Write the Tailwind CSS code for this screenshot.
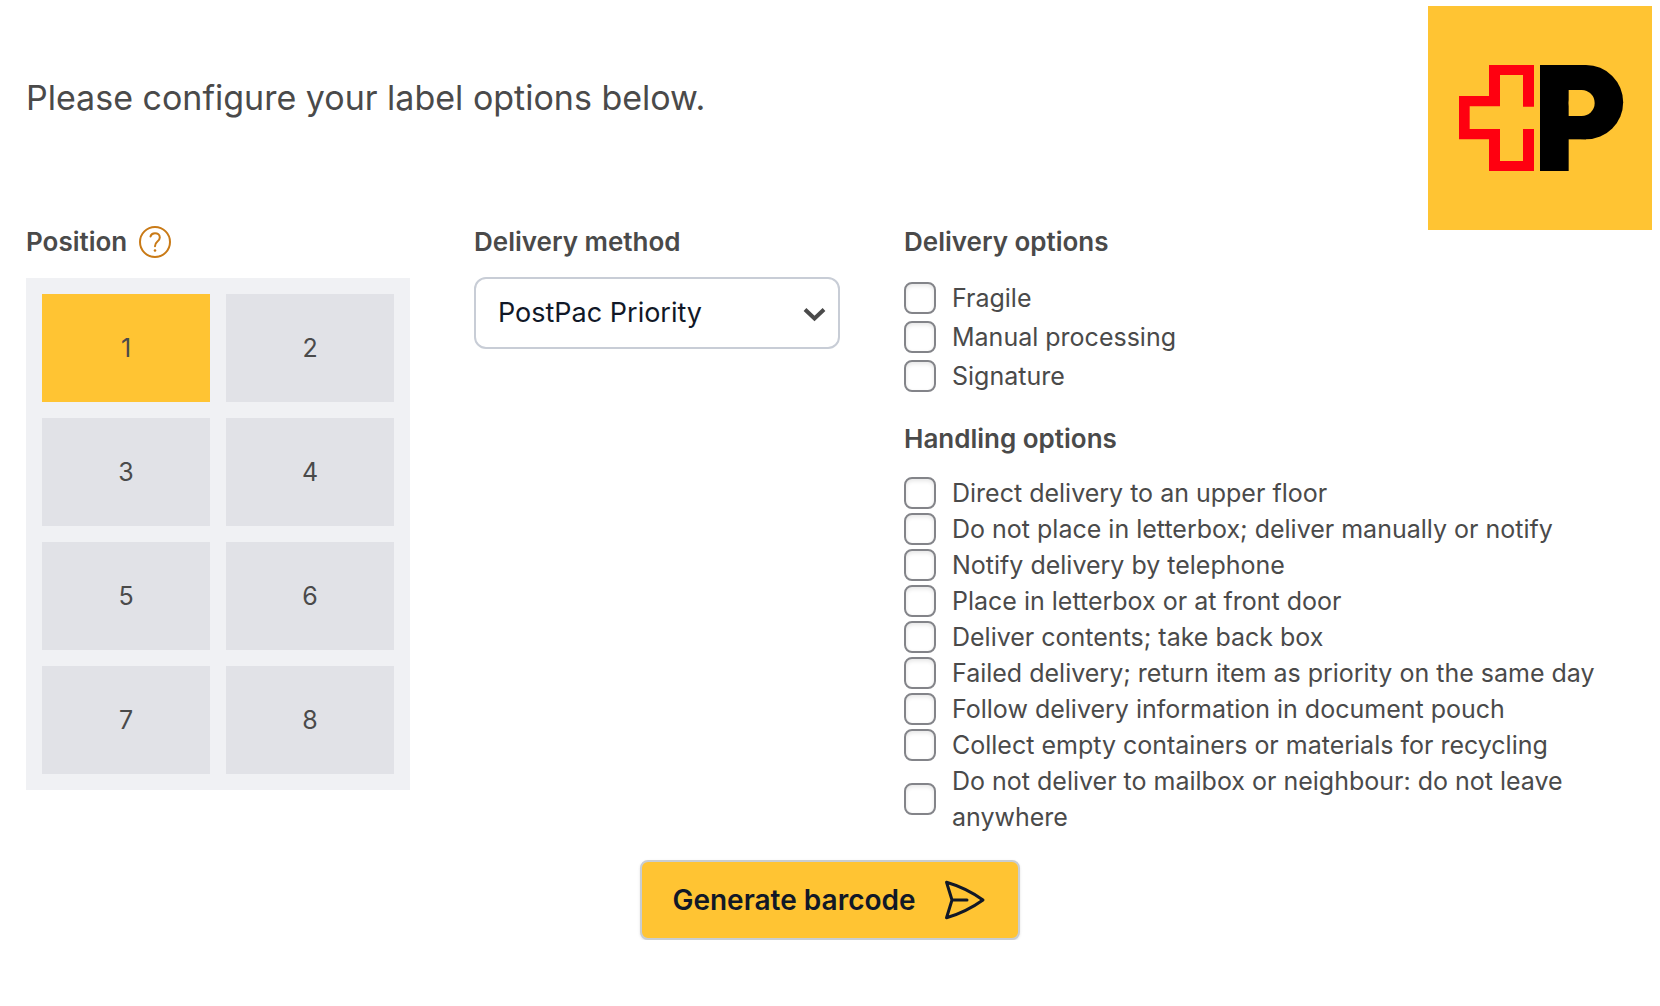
<!DOCTYPE html>
<html lang="en">
<head>
    <meta charset="UTF-8">
    <meta name="viewport" content="width=device-width, initial-scale=1.0">
    <title>Label options</title>
    <script src="https://cdn.jsdelivr.net/npm/@tailwindcss/browser@4"></script>
</head>
<body class="bg-white font-['Inter',sans-serif] text-[25px] leading-9 text-[#4a4a4a]">

    <header class="flex items-start justify-between pl-[26px] pr-2 pt-1.5 -mb-1.5">
        <h1 class="pt-[67px] text-[34px] leading-[50px]">Please configure your label options below.</h1>
        <!-- Carrier logo -->
        <svg class="size-56 shrink-0" viewBox="24 18 672 672" role="img" aria-label="Post">
            <rect x="24" y="18" width="672" height="672" fill="#ffc433"/>
            <path fill="#ff0010" d="M207 195H342V320H309V225H240V319H149V387H240V483H309V387H342V513H207V418H117V288H207Z"/>
            <rect x="360" y="195" width="86" height="318"/>
            <rect x="440" y="195" width="58" height="223"/>
            <circle cx="498" cy="306.500" r="111.500"/>
            <rect x="446" y="270" width="40" height="78" fill="#ffc433"/>
            <circle cx="485" cy="309" r="39" fill="#ffc433"/>
        </svg>
    </header>

    <form onsubmit="return false">
        <div class="flex gap-16 pl-[26px] pr-6">
            <section class="w-96 shrink-0">
                <div class="mb-[18px] flex items-center gap-3">
                    <h2 class="text-[26px] leading-9 font-semibold">Position</h2>
                    <button type="button" aria-label="Help" class="cursor-pointer text-[#c97a16]">
                        <svg class="size-8" viewBox="0 0 32 32" fill="none" stroke="currentColor" stroke-width="2" stroke-linecap="round">
                            <circle cx="16" cy="16" r="15"/>
                            <path d="M11.500 10.500C12 8.300 13.700 7.200 16 7.200C18.700 7.200 20.800 8.900 20.800 11.400C20.800 13.400 19.700 14.500 18.200 15.700C16.700 16.900 16 17.800 16 20.300"/>
                            <circle cx="16" cy="24.500" r="1.300" fill="currentColor" stroke="none"/>
                        </svg>
                    </button>
                </div>
                <div class="grid grid-cols-2 gap-4 bg-[#f0f1f4] p-4" id="positions">
                    <button type="button" class="h-[108px] cursor-pointer bg-[#ffc433]">1</button>
                    <button type="button" class="h-[108px] cursor-pointer bg-[#e1e2e7]">2</button>
                    <button type="button" class="h-[108px] cursor-pointer bg-[#e1e2e7]">3</button>
                    <button type="button" class="h-[108px] cursor-pointer bg-[#e1e2e7]">4</button>
                    <button type="button" class="h-[108px] cursor-pointer bg-[#e1e2e7]">5</button>
                    <button type="button" class="h-[108px] cursor-pointer bg-[#e1e2e7]">6</button>
                    <button type="button" class="h-[108px] cursor-pointer bg-[#e1e2e7]">7</button>
                    <button type="button" class="h-[108px] cursor-pointer bg-[#e1e2e7]">8</button>
                </div>
            </section>

            <section class="flex-1">
                <label for="method" class="mb-[17px] block text-[26px] leading-9 font-semibold">Delivery method</label>
                <div class="relative">
                    <select id="method" class="h-[72px] w-full appearance-none rounded-xl border-2 border-[#c8cdd6] bg-white pl-[22px] pr-14 text-[27px] text-[#111827]">
                        <option>PostPac Priority</option>
                        <option>PostPac Economy</option>
                    </select>
                    <svg class="pointer-events-none absolute right-3.5 top-6 size-6" viewBox="0 0 24 24" fill="none" stroke="#4a4a4a" stroke-width="4">
                        <path d="M3 8.500L12.500 17.500L22 8.500"/>
                    </svg>
                </div>
            </section>

            <section class="flex-2">
                <h2 class="mb-5 text-[26px] leading-9 font-semibold">Delivery options</h2>
                <div class="grid gap-[3px]">
                    <label class="flex items-center gap-4"><input type="checkbox" class="size-8 shrink-0 appearance-none rounded-lg border-2 border-[#838489] bg-white shadow-[inset_0_2px_4px_rgba(0,0,0,0.1)] checked:bg-[#ffc433]">Fragile</label>
                    <label class="flex items-center gap-4"><input type="checkbox" class="size-8 shrink-0 appearance-none rounded-lg border-2 border-[#838489] bg-white shadow-[inset_0_2px_4px_rgba(0,0,0,0.1)] checked:bg-[#ffc433]">Manual processing</label>
                    <label class="flex items-center gap-4"><input type="checkbox" class="size-8 shrink-0 appearance-none rounded-lg border-2 border-[#838489] bg-white shadow-[inset_0_2px_4px_rgba(0,0,0,0.1)] checked:bg-[#ffc433]">Signature</label>
                </div>

                <h2 class="mb-[18px] mt-[27px] text-[26px] leading-9 font-semibold">Handling options</h2>
                <div class="grid">
                    <label class="flex items-center gap-4"><input type="checkbox" class="size-8 shrink-0 appearance-none rounded-lg border-2 border-[#838489] bg-white shadow-[inset_0_2px_4px_rgba(0,0,0,0.1)] checked:bg-[#ffc433]">Direct delivery to an upper floor</label>
                    <label class="flex items-center gap-4"><input type="checkbox" class="size-8 shrink-0 appearance-none rounded-lg border-2 border-[#838489] bg-white shadow-[inset_0_2px_4px_rgba(0,0,0,0.1)] checked:bg-[#ffc433]">Do not place in letterbox; deliver manually or notify</label>
                    <label class="flex items-center gap-4"><input type="checkbox" class="size-8 shrink-0 appearance-none rounded-lg border-2 border-[#838489] bg-white shadow-[inset_0_2px_4px_rgba(0,0,0,0.1)] checked:bg-[#ffc433]">Notify delivery by telephone</label>
                    <label class="flex items-center gap-4"><input type="checkbox" class="size-8 shrink-0 appearance-none rounded-lg border-2 border-[#838489] bg-white shadow-[inset_0_2px_4px_rgba(0,0,0,0.1)] checked:bg-[#ffc433]">Place in letterbox or at front door</label>
                    <label class="flex items-center gap-4"><input type="checkbox" class="size-8 shrink-0 appearance-none rounded-lg border-2 border-[#838489] bg-white shadow-[inset_0_2px_4px_rgba(0,0,0,0.1)] checked:bg-[#ffc433]">Deliver contents; take back box</label>
                    <label class="flex items-center gap-4"><input type="checkbox" class="size-8 shrink-0 appearance-none rounded-lg border-2 border-[#838489] bg-white shadow-[inset_0_2px_4px_rgba(0,0,0,0.1)] checked:bg-[#ffc433]">Failed delivery; return item as priority on the same day</label>
                    <label class="flex items-center gap-4"><input type="checkbox" class="size-8 shrink-0 appearance-none rounded-lg border-2 border-[#838489] bg-white shadow-[inset_0_2px_4px_rgba(0,0,0,0.1)] checked:bg-[#ffc433]">Follow delivery information in document pouch</label>
                    <label class="flex items-center gap-4"><input type="checkbox" class="size-8 shrink-0 appearance-none rounded-lg border-2 border-[#838489] bg-white shadow-[inset_0_2px_4px_rgba(0,0,0,0.1)] checked:bg-[#ffc433]">Collect empty containers or materials for recycling</label>
                    <label class="flex items-center gap-4"><input type="checkbox" class="size-8 shrink-0 appearance-none rounded-lg border-2 border-[#838489] bg-white shadow-[inset_0_2px_4px_rgba(0,0,0,0.1)] checked:bg-[#ffc433]">Do not deliver to mailbox or neighbour: do not leave anywhere</label>
                </div>
            </section>
        </div>

        <div class="mt-[25px] flex justify-center">
            <button type="submit" class="flex h-20 cursor-pointer items-center gap-6 rounded-lg border-2 border-[#c8cdd2] bg-[#ffc433] px-[30px] text-[28px] font-semibold text-[#111827] shadow-sm">
                Generate barcode
                <svg class="size-12" viewBox="0 0 24 24" fill="none" stroke="currentColor" stroke-width="1.500" stroke-linecap="round" stroke-linejoin="round">
                    <path d="M6 12L3.269 3.126A59.768 59.768 0 0 1 21.485 12A59.770 59.770 0 0 1 3.270 20.876L5.999 12ZM6 12H13.500"/>
                </svg>
            </button>
        </div>
    </form>

    <script>
        const cells = document.querySelectorAll('#positions button');

        cells.forEach((cell) => {
            cell.addEventListener('click', () => {
                cells.forEach((other) => {
                    other.classList.remove('bg-[#ffc433]');
                    other.classList.add('bg-[#e1e2e7]');
                });
                cell.classList.remove('bg-[#e1e2e7]');
                cell.classList.add('bg-[#ffc433]');
            });
        });
    </script>

</body>
</html>
